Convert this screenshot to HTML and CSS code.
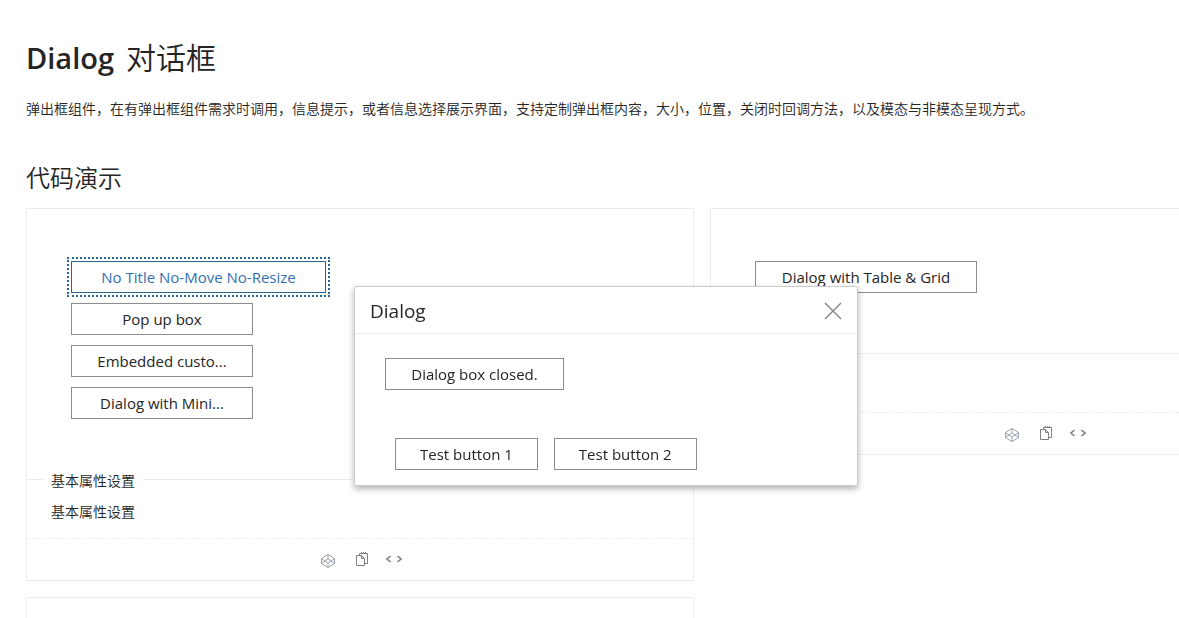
FILE: index.html
```
<!DOCTYPE html>
<html lang="zh-CN">
<head>
<meta charset="utf-8">
<title>Dialog 对话框</title>
<link rel="stylesheet" href="styles.css">
</head>
<body>
<svg class="sprite" aria-hidden="true">
  <symbol id="icon-sandbox" viewBox="0 0 16 16">
    <path d="M8 1.500 14.500 5.500v5L8 14.500 1.500 10.500v-5zM1.500 5.500 8 10.200l6.500-4.700M1.500 10.500 8 5.800l6.500 4.700M8 1.500v4.300M8 10.200v4.300"/>
  </symbol>
  <symbol id="icon-copy" viewBox="0 0 16 16">
    <path d="M5.500 3V1.500h8v10H11M7.500 1.500V0M9.500 1.500V0M11.500 1.500V0M2.500 3.500h5L10.500 6.500v7h-8zM7.500 3.500v3h3"/>
  </symbol>
  <symbol id="icon-code" viewBox="0 0 16 16">
    <path stroke-width="1.6" d="M4.500 4 1 7l3.500 3M11.500 4 15 7l-3.500 3"/>
  </symbol>
</svg>
<main class="page">
  <h1 class="title"><span class="title-name">Dialog</span> <span>对话框</span></h1>
  <p class="intro">弹出框组件，在有弹出框组件需求时调用，信息提示，或者信息选择展示界面，支持定制弹出框内容，大小，位置，关闭时回调方法，以及模态与非模态呈现方式。</p>
  <h2 class="subtitle">代码演示</h2>
  <div class="demos">
    <div class="column">
      <section class="card">
        <div class="demo">
          <button class="btn btn-active" type="button">No Title No-Move No-Resize</button>
          <button class="btn btn-fixed" type="button">Pop up box</button>
          <button class="btn btn-fixed" type="button">Embedded custo...</button>
          <button class="btn btn-fixed" type="button">Dialog with Mini...</button>
        </div>
        <div class="meta">
          <h3 class="meta-title">基本属性设置</h3>
          <p class="meta-text">基本属性设置</p>
        </div>
        <div class="actions">
          <button class="icon-btn sandbox" type="button" aria-label="Sandbox"><svg><use href="#icon-sandbox"/></svg></button>
          <button class="icon-btn" type="button" aria-label="Copy"><svg><use href="#icon-copy"/></svg></button>
          <button class="icon-btn" type="button" aria-label="Code"><svg><use href="#icon-code"/></svg></button>
        </div>
      </section>
      <section class="card card-next"></section>
    </div>
    <div class="column">
      <section class="card card-right">
        <div class="demo">
          <button class="btn btn-table" type="button">Dialog with Table &amp; Grid</button>
        </div>
        <div class="meta"></div>
        <div class="actions">
          <button class="icon-btn sandbox" type="button" aria-label="Sandbox"><svg><use href="#icon-sandbox"/></svg></button>
          <button class="icon-btn" type="button" aria-label="Copy"><svg><use href="#icon-copy"/></svg></button>
          <button class="icon-btn" type="button" aria-label="Code"><svg><use href="#icon-code"/></svg></button>
        </div>
      </section>
    </div>
  </div>
</main>
<div class="dialog" role="dialog" aria-labelledby="dialog-title">
  <header class="dialog-head">
    <h2 class="dialog-title" id="dialog-title">Dialog</h2>
    <button class="close" type="button" aria-label="Close"><svg viewBox="0 0 18 18"><path d="M1 1l16 16M17 1 1 17"/></svg></button>
  </header>
  <div class="dialog-body">
    <button class="btn btn-closed" type="button">Dialog box closed.</button>
    <div class="dialog-row">
      <button class="btn" type="button">Test button 1</button>
      <button class="btn" type="button">Test button 2</button>
    </div>
  </div>
</div>
</body>
</html>
```
FILE: styles.css
```
* {
  box-sizing: border-box;
}

body {
  margin: 0;
  overflow-x: hidden;
  background: #fff;
  color: #252525;
  font-family: "Open Sans", "Noto Sans CJK SC", sans-serif;
  font-size: 14px;
  font-weight: 350;
}

h1, h2, h3, p {
  margin: 0;
  font-weight: 350;
}

.sprite {
  display: none;
}

.page {
  padding: 36px 0 0 26px;
}

.title {
  display: flex;
  gap: 12px;
  font-size: 30px;
  line-height: 44px;
}

.title-name {
  font-size: 29px;
  font-weight: 600;
}

.intro {
  margin-top: 18px;
  line-height: 22px;
}

.subtitle {
  margin-top: 40px;
  font-size: 24px;
  line-height: 36px;
}

.demos {
  display: grid;
  grid-template-columns: 668fr 469fr;
  gap: 16px;
  margin-top: 12px;
}

.column {
  display: flex;
  flex-direction: column;
  gap: 16px;
  min-width: 0;
}

.card {
  border: 1px solid #ebedf0;
}

.card-right {
  border-right: 0;
}

.card-next {
  height: 21px;
  border-bottom: 0;
}

.demo {
  display: flex;
  flex-direction: column;
  align-items: flex-start;
  gap: 10px;
  padding: 52px 44px 60px;
}

.btn {
  height: 32px;
  padding: 0 24px;
  border: 1px solid #8c8c8c;
  background: #fff;
  color: #252525;
  font: 400 15px/30px "Open Sans", sans-serif;
  white-space: nowrap;
}

.btn-fixed {
  width: 182px;
}

.btn-table {
  min-width: 222px;
}

.btn-closed {
  min-width: 179px;
}

.btn-active {
  min-width: 255px;
  border-color: #2a6496;
  color: #3470b0;
  outline: 2px dotted #2a6496;
  outline-offset: 2px;
}

.meta {
  height: 59px;
  border-top: 1px solid #ebedf0;
}

.meta-title {
  width: fit-content;
  margin: -10px 0 0 16px;
  padding: 0 8px;
  background: #fff;
  font-size: 14px;
  line-height: 22px;
}

.meta-text {
  margin-top: 9px;
  padding-left: 24px;
  line-height: 22px;
}

.actions {
  display: flex;
  justify-content: center;
  gap: 14px;
  height: 42px;
  padding: 12px 0 0 2px;
  border-top: 1px dashed #ebedf0;
}

.card-right .actions {
  padding-left: 200px;
}

.icon-btn {
  width: 18px;
  height: 18px;
  padding: 1px;
  border: 0;
  background: none;
  color: #808080;
}

.icon-btn svg {
  display: block;
  width: 16px;
  height: 16px;
  fill: none;
  stroke: currentColor;
}

.sandbox {
  margin: 1px 2px 0 0;
  color: #9aa3ad;
}

.dialog {
  position: fixed;
  top: 286px;
  left: 354px;
  width: 504px;
  border: 1px solid #ccc;
  border-radius: 2px;
  background: #fff;
  box-shadow: 0 3px 6px rgba(0, 0, 0, 0.3);
}

.dialog-head {
  display: flex;
  align-items: center;
  justify-content: space-between;
  height: 47px;
  padding: 2px 15px 0;
  border-bottom: 1px solid #eee;
}

.dialog-title {
  font-size: 19px;
  font-weight: 400;
}

.close {
  width: 18px;
  height: 18px;
  padding: 0;
  border: 0;
  background: none;
}

.close svg {
  display: block;
  width: 18px;
  height: 18px;
  stroke: #808080;
  stroke-width: 1.3;
}

.dialog-body {
  padding: 24px 30px 15px;
}

.dialog-row {
  display: flex;
  gap: 16px;
  margin: 48px 0 0 10px;
}
```
